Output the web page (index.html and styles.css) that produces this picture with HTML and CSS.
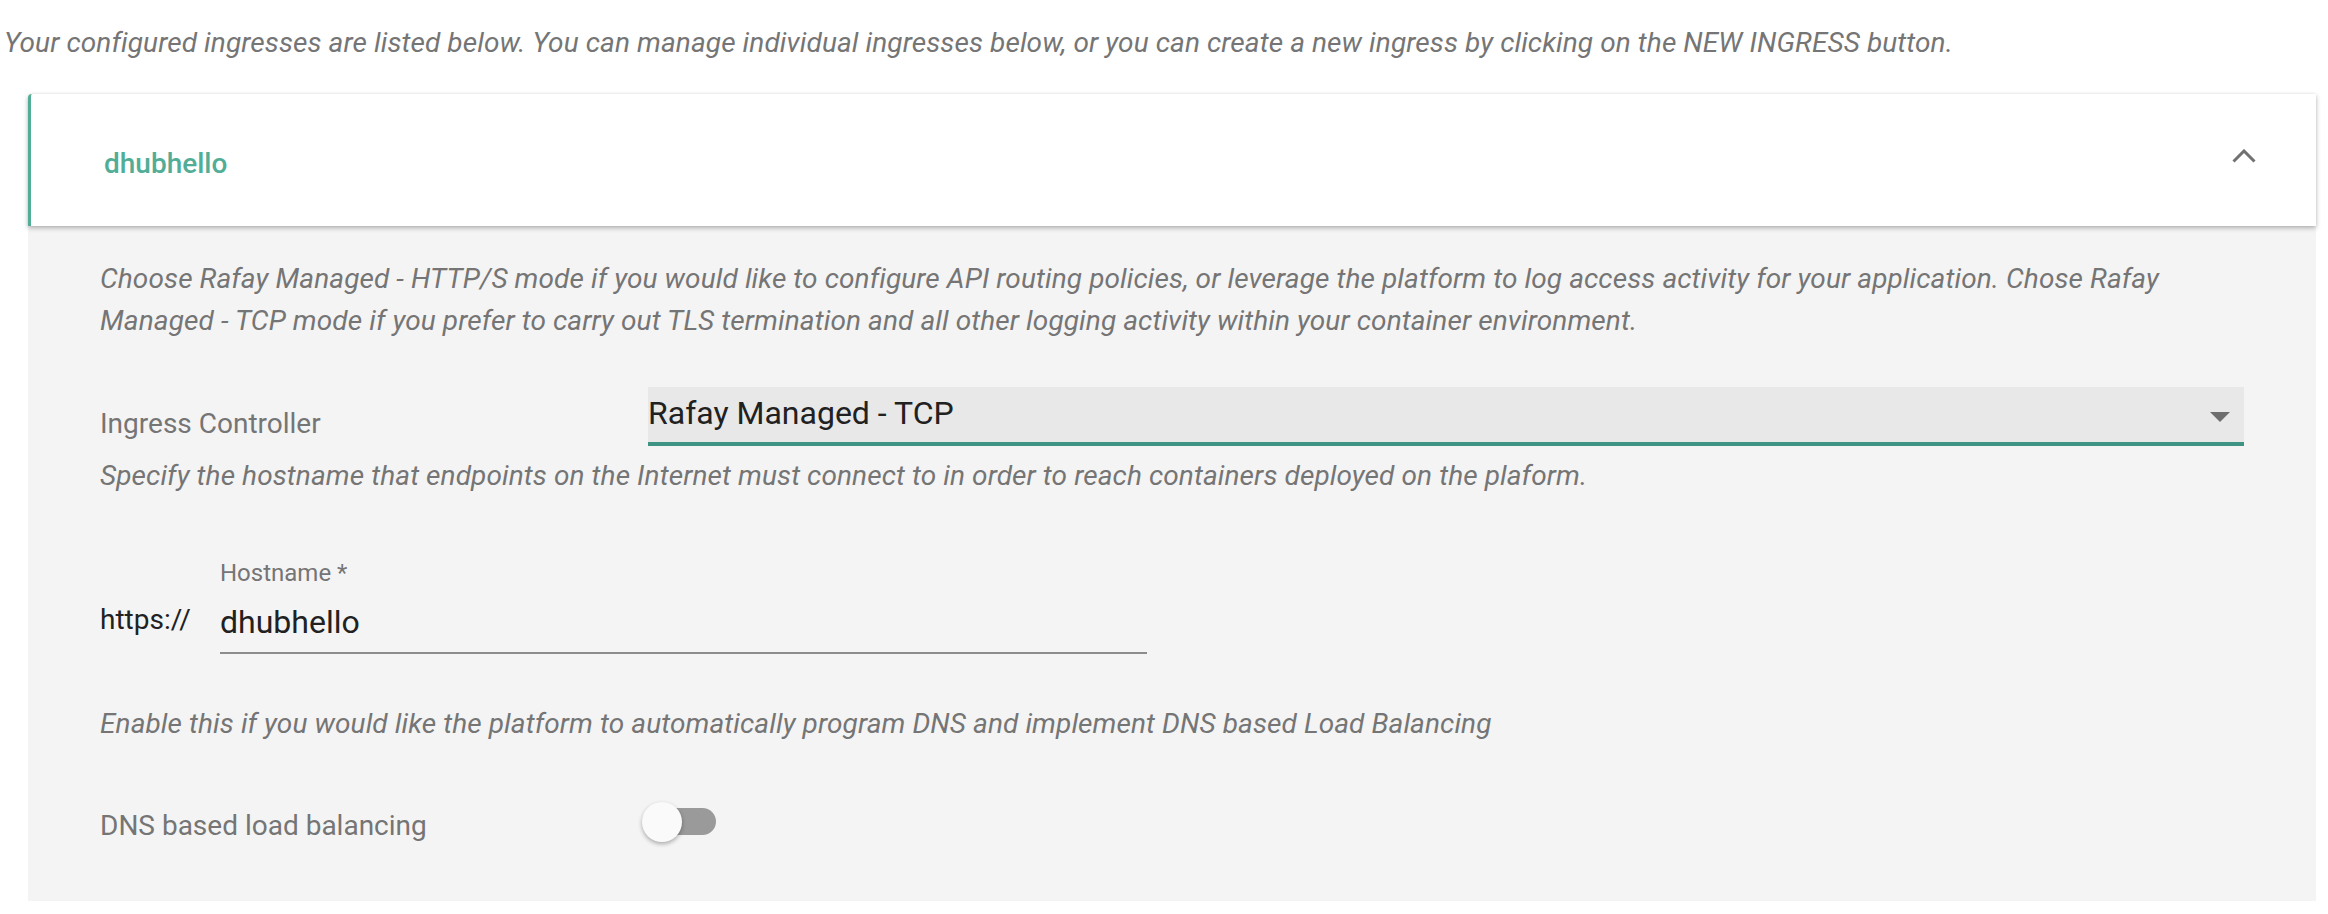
FILE: index.html
```html
<!DOCTYPE html>
<html lang="en">
<head>
  <meta charset="UTF-8" />
  <meta name="viewport" content="width=device-width, initial-scale=1.0"/>
  <title>Ingresses</title>
  <link rel="stylesheet" href="styles.css">
</head>
<body>
  <div class="page">
    <p class="intro">Your configured ingresses are listed below. You can manage individual ingresses below, or you can create a new ingress by clicking on the NEW INGRESS button.</p>

    <div class="card">
      <div class="card-head">
        <span class="card-title">dhubhello</span>
        <svg class="chevron" width="24" height="14" viewBox="0 0 24 14">
          <polyline points="1.5,12.5 12,2 22.5,12.5" fill="none" stroke="#717171" stroke-width="3" />
        </svg>
      </div>

      <div class="card-body">
        <p class="hint">Choose Rafay Managed - HTTP/S mode if you would like to configure API routing policies, or leverage the platform to log access activity for your application. Chose Rafay Managed - TCP mode if you prefer to carry out TLS termination and all other logging activity within your container environment.</p>

        <div class="row">
          <span class="row-label controller-label">Ingress Controller</span>
          <div class="select">
            <span class="select-value">Rafay Managed - TCP</span>
            <svg class="select-arrow" width="20" height="10" viewBox="0 0 20 10">
              <polygon points="0,0 20,0 10,10" fill="#6e6e6e" />
            </svg>
          </div>
        </div>

        <p class="hint hint-tight">Specify the hostname that endpoints on the Internet must connect to in order to reach containers deployed on the plaform.</p>

        <div class="host-row">
          <span class="prefix">https://</span>
          <div class="text-field">
            <label class="field-label">Hostname *</label>
            <div class="field-value">dhubhello</div>
          </div>
        </div>

        <p class="hint hint-enable">Enable this if you would like the platform to automatically program DNS and implement DNS based Load Balancing</p>

        <div class="row dns-row">
          <span class="row-label">DNS based load balancing</span>
          <span class="switch">
            <span class="track"></span>
            <span class="thumb"></span>
          </span>
        </div>
      </div>
    </div>
  </div>
</body>
</html>
```

FILE: styles.css
```css
body {
  margin: 0;
  font-family: Roboto, "Liberation Sans", sans-serif;
  background: #fff;
}

.page {
  padding: 22px 12px 0 4px;
}

.intro {
  margin: 0;
  font-size: 28px;
  line-height: 42px;
  font-style: italic;
  letter-spacing: 0.1px;
  color: #757575;
}

.card {
  margin: 30px 0 0 24px;
}

.card-head {
  display: flex;
  align-items: center;
  justify-content: space-between;
  height: 132px;
  padding: 0 60px 0 73px;
  background: #fff;
  border-left: 3px solid #52ad97;
  border-radius: 4px 0 0 0;
  box-shadow: 0 2px 5px rgba(0,0,0,0.28), 0 0 3px rgba(0,0,0,0.06);
  position: relative;
  z-index: 1;
}

.card-title {
  font-size: 28px;
  font-weight: 500;
  color: #52ad97;
  padding-top: 6px;
}

.chevron {
  margin-top: -8px;
}

.card-body {
  background: #f4f4f4;
  padding: 32px 72px 59px 72px;
}

.hint {
  margin: 0;
  font-size: 28px;
  line-height: 42px;
  font-style: italic;
  letter-spacing: 0.1px;
  color: #757575;
}

.row {
  display: flex;
  align-items: center;
  margin-top: 45px;
}

.row-label {
  width: 548px;
  flex-shrink: 0;
  font-size: 28px;
  color: #757575;
}

.controller-label {
  padding-top: 14px;
}

.select {
  flex: 1;
  display: flex;
  align-items: center;
  justify-content: space-between;
  height: 55px;
  background: #e8e8e8;
  border-bottom: 4px solid #3f9382;
  padding-right: 14px;
}

.select-value {
  font-size: 32px;
  color: #212121;
  margin-top: -4px;
}

.select-arrow {
  margin-top: 4px;
}

.hint-tight {
  margin-top: 9px;
}

.host-row {
  display: flex;
  align-items: flex-end;
  margin-top: 61px;
}

.prefix {
  width: 120px;
  font-size: 28px;
  line-height: 40px;
  color: #212121;
  padding-bottom: 14px;
}

.text-field {
  width: 927px;
  border-bottom: 2px solid #8c8c8c;
  padding-bottom: 10px;
}

.field-label {
  display: block;
  font-size: 24px;
  line-height: 30px;
  color: #757575;
}

.field-value {
  margin-top: 14px;
  font-size: 32px;
  line-height: 40px;
  color: #212121;
}

.hint-enable {
  margin-top: 49px;
}

.dns-row {
  margin-top: 57px;
  height: 40px;
}

.dns-row .row-label {
  padding-top: 6px;
}

.switch {
  position: relative;
  width: 74px;
  height: 40px;
  margin-left: -6px;
}

.track {
  position: absolute;
  left: 4px;
  right: 0;
  top: 6px;
  height: 27px;
  border-radius: 14px;
  background: #9a9a9a;
}

.thumb {
  position: absolute;
  left: 0;
  top: 0;
  width: 40px;
  height: 40px;
  border-radius: 50%;
  background: #fafafa;
  box-shadow: 0 2px 4px rgba(0,0,0,0.3);
}
```
